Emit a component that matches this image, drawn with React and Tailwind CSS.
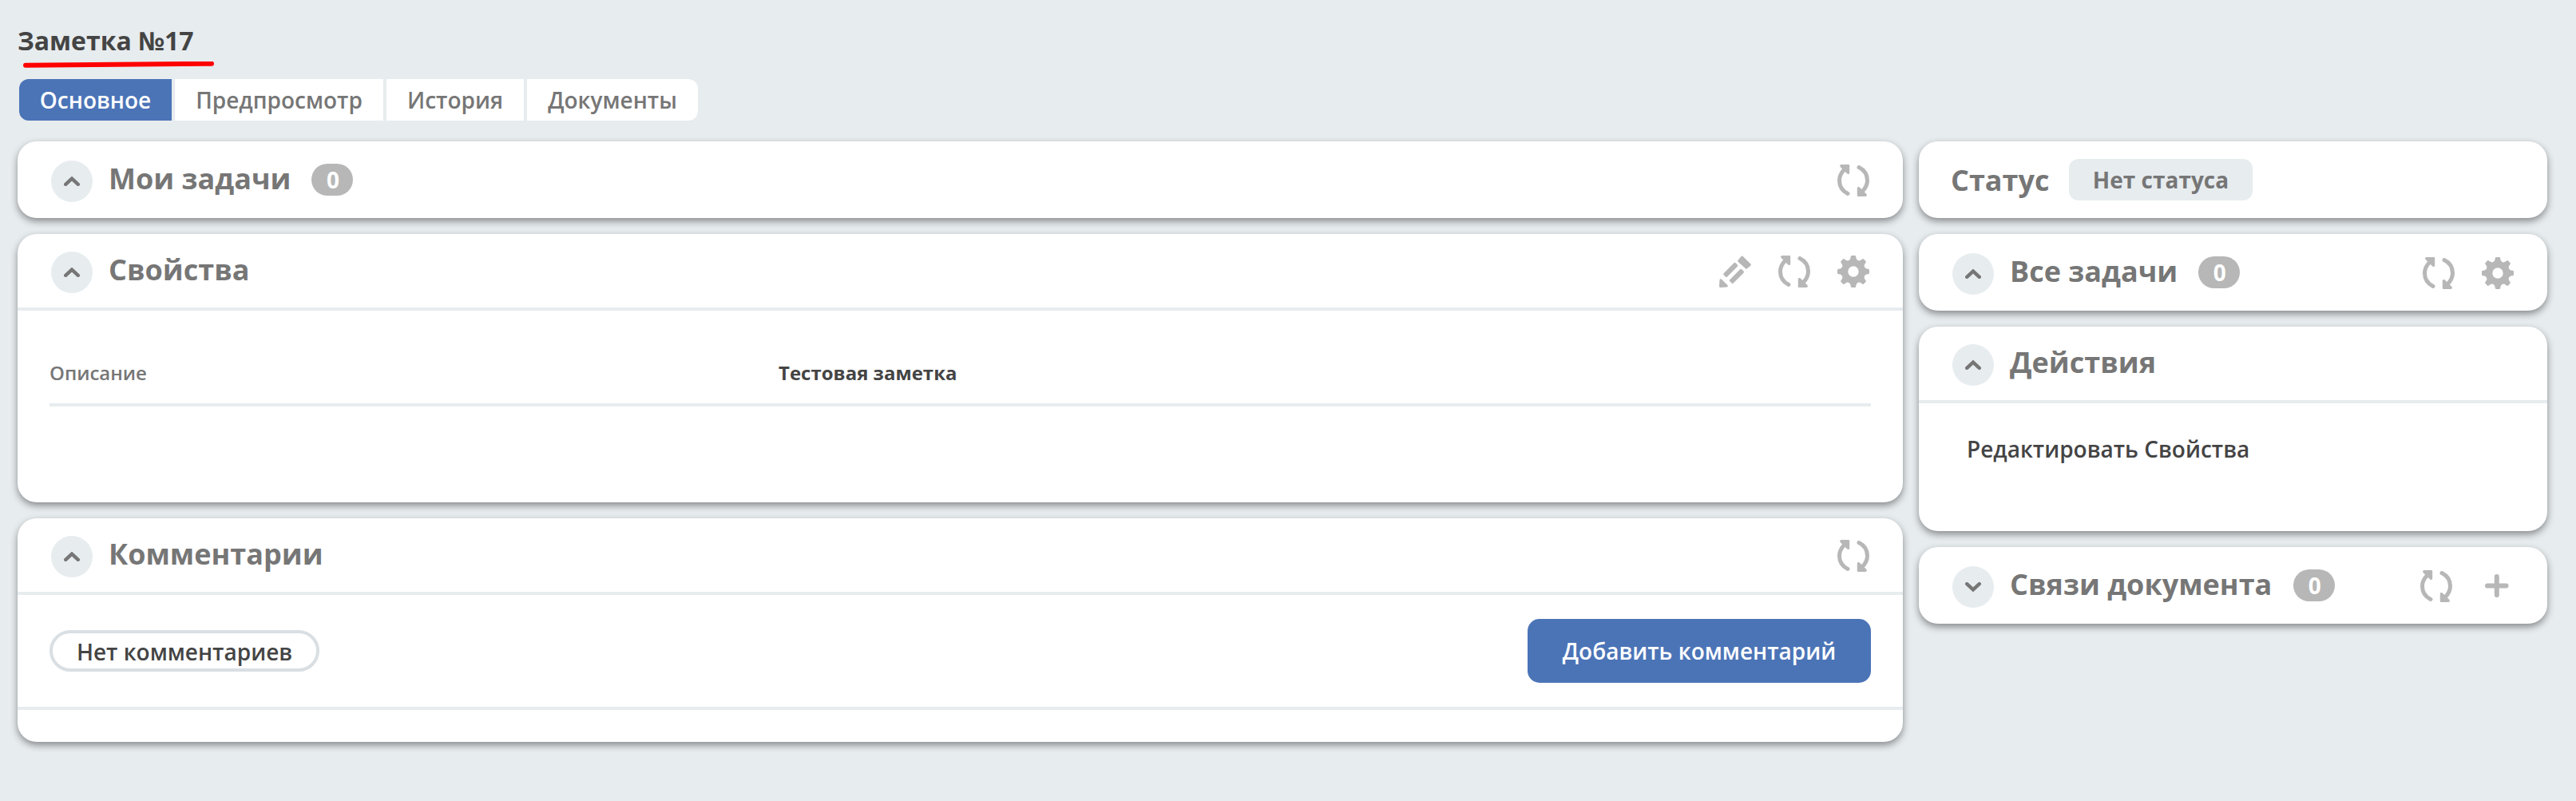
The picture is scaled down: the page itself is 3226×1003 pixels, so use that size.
import React from "react";

function Refresh() {
  return (
    <svg viewBox="0 0 40 40" className="size-10 shrink-0" fill="none" stroke="#b7b7b7" strokeWidth="5" strokeLinecap="round" strokeLinejoin="round">
      <path d="M13 36.500C6 33 2.500 27 2.500 20C2.500 14 5 10 9 6" />
      <path d="M5 0H14Q15.200 0 15.200 1.200V10.500C15.200 12.200 13 12.500 12 11.200L3.800 3.200C2.500 1.800 3.300 0 5 0Z" fill="#b7b7b7" stroke="none" />
      <path d="M27 3.500C34 7 37.500 13 37.500 20C37.500 26 35 30 31 34" />
      <path d="M35 40H26Q24.800 40 24.800 38.800V29.500C24.800 27.800 27 27.500 28 28.800L36.200 36.800C37.500 38.200 36.700 40 35 40Z" fill="#b7b7b7" stroke="none" />
    </svg>
  );
}

function Gear() {
  return (
    <svg viewBox="0 0 40 40" className="size-10 shrink-0" fill="#b7b7b7">
      <path
        fillRule="evenodd"
        d="M18.200 0H21.800Q23 0 23.200 1.200L23.600 3.500Q24.200 5.500 26.200 6.200Q28 6.800 29.600 5.600L31.200 4.400Q32.200 3.700 33.100 4.600L35.400 6.900Q36.300 7.800 35.600 8.800L34.400 10.400Q33.200 12 33.800 13.800Q34.500 15.800 36.500 16.400L38.800 16.800Q40 17 40 18.200V21.800Q40 23 38.800 23.200L36.500 23.600Q34.500 24.200 33.800 26.200Q33.200 28 34.400 29.600L35.600 31.200Q36.300 32.200 35.400 33.100L33.100 35.400Q32.200 36.300 31.200 35.600L29.600 34.400Q28 33.200 26.200 33.800Q24.200 34.500 23.600 36.500L23.200 38.800Q23 40 21.800 40H18.200Q17 40 16.800 38.800L16.400 36.500Q15.800 34.500 13.800 33.800Q12 33.200 10.400 34.400L8.800 35.600Q7.800 36.300 6.900 35.400L4.600 33.100Q3.700 32.200 4.400 31.200L5.600 29.600Q6.800 28 6.200 26.200Q5.500 24.200 3.500 23.600L1.200 23.200Q0 23 0 21.800V18.200Q0 17 1.200 16.800L3.500 16.400Q5.500 15.800 6.200 13.800Q6.800 12 5.600 10.400L4.400 8.800Q3.700 7.800 4.600 6.900L6.900 4.600Q7.800 3.700 8.800 4.400L10.400 5.600Q12 6.800 13.800 6.200Q15.800 5.500 16.400 3.500L16.800 1.200Q17 0 18.200 0ZM20 13.300A6.700 6.700 0 1 0 20 26.700A6.700 6.700 0 1 0 20 13.300Z"
      />
    </svg>
  );
}

function Pencil() {
  return (
    <svg viewBox="0 0 40 40" className="size-10 shrink-0" fill="#b7b7b7" stroke="#b7b7b7" strokeWidth="3" strokeLinejoin="round">
      <path d="M24.800 6.800L28.700 2L38.300 11.600L34 15.200Z" />
      <path d="M6.700 23.200L19.500 10.400L21.800 12.600L9 25.400Z" />
      <path d="M14.400 31.200L27.200 18.400L29.500 20.600L16.700 33.400Z" />
      <path d="M2 30.800L9.300 38.100L1.500 38.500Z" />
    </svg>
  );
}

function Plus() {
  return (
    <svg viewBox="0 0 30 30" className="size-[30px] shrink-0" stroke="#b7b7b7" strokeWidth="6" strokeLinecap="round">
      <path d="M3 14.500H26.500M14.800 3V26" />
    </svg>
  );
}

function Toggle({ open = true, className = "mt-6" }) {
  return (
    <button className={`flex size-[52px] shrink-0 items-center justify-center rounded-full bg-[#e7ecef] ${className}`}>
      <svg viewBox="0 0 20 12" className="h-3 w-5" fill="none" stroke="#767676" strokeWidth="4.400" strokeLinecap="round">
        <path d={open ? "M2.200 9.800L10 2.600L17.800 9.800" : "M2.200 2.200L10 9.400L17.800 2.200"} strokeLinejoin="miter" />
      </svg>
    </button>
  );
}

function Badge({ className = "ml-[26px]" }) {
  return (
    <span className={`mt-7 h-10 w-[52px] shrink-0 rounded-[20px] bg-[#b7b7b7] pl-px text-center text-[28px] leading-[40px] font-bold text-white ${className}`}>0</span>
  );
}

function Card({ className = "", children }) {
  return <section className={`rounded-[24px] bg-white shadow-[0_4px_10px_rgba(0,0,0,0.42)] ${className}`}>{children}</section>;
}

const title = "text-[36px] leading-[48px] font-bold whitespace-nowrap text-[#767676]";

export default function App() {
  return (
    <main className="h-[1003px] w-[3226px] overflow-hidden bg-[#e7ecef] pl-[22px] font-['Open_Sans','Noto_Sans',sans-serif] text-[#444]">
      <h1 className="h-[77px] pt-[29px] text-[32px] leading-[44px] font-bold">Заметка №17</h1>
      <svg viewBox="0 0 240 12" className="ml-[7px] h-3 w-60" stroke="#ff0000" strokeWidth="6" strokeLinecap="round">
        <path d="M3 4.700L236 2.700" />
      </svg>
      <nav className="mt-[10px] ml-[2px] flex h-[52px] w-[850px] gap-1 overflow-hidden rounded-[12px] text-center text-[28px] leading-[52px] font-semibold text-[#767676]">
        <a className="w-[191px] bg-[#4b74b7] text-white">Основное</a>
        <a className="w-[261px] bg-white">Предпросмотр</a>
        <a className="w-[172px] bg-white">История</a>
        <a className="w-[214px] bg-white">Документы</a>
      </nav>

      <div className="mt-[26px] flex items-start gap-5">
        <div className="flex w-[2361px] flex-col gap-5">
          <Card className="flex h-24 px-[42px]">
            <Toggle />
            <h2 className={`mt-[23px] ml-5 ${title}`}>Мои задачи</h2>
            <Badge />
            <div className="mt-[29px] ml-auto">
              <Refresh />
            </div>
          </Card>

          <Card className="h-[336px]">
            <div className="flex h-24 border-b-4 border-[#e7ecef] px-[42px]">
              <Toggle className="mt-[22px]" />
              <h2 className={`mt-[21px] ml-5 ${title}`}>Свойства</h2>
              <div className="mt-[27px] ml-auto flex gap-[34px]">
                <Pencil />
                <Refresh />
                <Gear />
              </div>
            </div>
            <dl className="mx-10 grid h-[120px] grid-cols-[913px_1fr] border-b-4 border-[#e7ecef] pt-[62px] text-[24px] leading-8">
              <dt className="font-semibold text-[#767676]">Описание</dt>
              <dd className="font-bold">Тестовая заметка</dd>
            </dl>
          </Card>

          <Card className="h-[280px]">
            <div className="flex h-24 border-b-4 border-[#e7ecef] px-[42px]">
              <Toggle className="mt-[22px]" />
              <h2 className={`mt-[21px] ml-5 ${title}`}>Комментарии</h2>
              <div className="mt-[27px] ml-auto">
                <Refresh />
              </div>
            </div>
            <div className="flex h-36 items-center justify-between border-b-4 border-[#e7ecef] px-10 text-[28px]">
              <span className="h-[52px] w-[338px] rounded-[26px] border-4 border-[#d9dfe3] text-center leading-[46px] font-semibold">Нет комментариев</span>
              <button className="h-20 w-[430px] rounded-[15px] bg-[#4b74b7] leading-[80px] font-semibold text-white">Добавить комментарий</button>
            </div>
          </Card>
        </div>

        <div className="flex w-[787px] flex-col gap-5">
          <Card className="flex h-24 pl-10">
            <h2 className={`mt-[25px] w-[148px] ${title}`}>Статус</h2>
            <span className="mt-[22px] h-[52px] w-[230px] rounded-[12px] bg-[#e7ecef] text-center text-[28px] leading-[52px] font-bold text-[#767676]">Нет статуса</span>
          </Card>
          <Card className="flex h-24 px-[42px]">
            <Toggle />
            <h2 className={`mt-[23px] ml-5 ${title}`}>Все задачи</h2>
            <Badge />
            <div className="mt-[29px] ml-auto flex gap-[34px]">
              <Refresh />
              <Gear />
            </div>
          </Card>
          <Card className="h-64">
            <div className="flex h-24 border-b-4 border-[#e7ecef] px-[42px]">
              <Toggle className="mt-[22px]" />
              <h2 className={`mt-[21px] ml-5 ${title}`}>Действия</h2>
            </div>
            <a className="block pt-[37px] pl-[60px] text-[28px] leading-[40px] font-semibold">Редактировать Свойства</a>
          </Card>
          <Card className="flex h-24 pr-[48px] pl-[42px]">
            <Toggle open={false} />
            <h2 className={`mt-[23px] ml-5 ${title}`}>Связи документа</h2>
            <Badge className="ml-[27px]" />
            <div className="mt-[29px] ml-auto flex gap-[41px]">
              <Refresh />
              <div className="mt-[5px]">
                <Plus />
              </div>
            </div>
          </Card>
        </div>
      </div>
    </main>
  );
}
